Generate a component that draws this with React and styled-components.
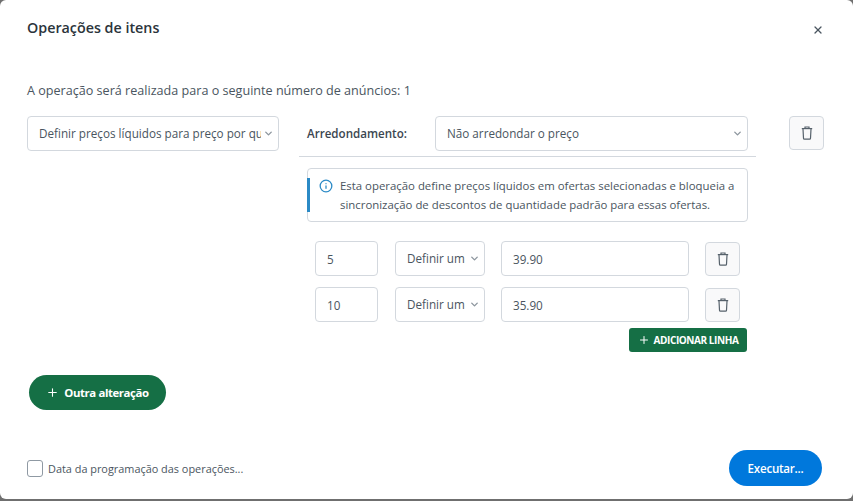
import styled, { createGlobalStyle } from "styled-components";
import { ChevronDown, Info, Plus, X } from "lucide-react";

const Global = createGlobalStyle`
  html, body {
    margin: 0;
    background: #6f6f6f;
  }
  * {
    box-sizing: border-box;
  }
`;

const Modal = styled.div`
  width: 853px;
  height: 499px;
  display: flex;
  flex-direction: column;
  background: #fff;
  border-radius: 6px;
  font-family: "Open Sans", "Liberation Sans", sans-serif;
  font-size: 11.7px;
  color: #4a5560;
`;

const Header = styled.div`
  height: 82px;
  padding: 18px 29px 0 27px;
  display: flex;
  justify-content: space-between;
  align-items: flex-start;
`;

const Title = styled.div`
  font-size: 14.3px;
  line-height: 20px;
  font-weight: 600;
  color: #2b343b;
`;

const Close = styled.div`
  margin-top: 6px;
  color: #4a5560;
  display: flex;
`;

const Count = styled.div`
  padding-left: 27px;
  font-size: 12.6px;
  line-height: 18px;
  height: 18px;
  color: #4a5560;
`;

const OperationRow = styled.div`
  margin-top: 16px;
  padding-left: 27px;
  display: flex;
  align-items: flex-start;
`;

const Panel = styled.div`
  width: 457px;
  margin-left: 20px;
  margin-right: 33px;
`;

const Rounding = styled.div`
  display: flex;
  align-items: center;
  padding: 0 8px 5px;
  border-bottom: 1px solid #d3d8de;
`;

const RoundingLabel = styled.div`
  width: 128px;
  font-size: 11.6px;
  font-weight: 600;
  color: #3b4650;
`;

const Select = styled.div`
  width: ${(p) => p.$width}px;
  height: 35px;
  flex: none;
  display: flex;
  align-items: center;
  padding: 0 4px 1px 11px;
  gap: 2px;
  background: #fff;
  border: 1px solid #d3d8de;
  border-radius: 4px;
  color: #4a5560;
  span {
    flex: 1;
    overflow: hidden;
    white-space: nowrap;
  }
  svg {
    flex: none;
    color: #8d969e;
  }
`;

const Input = styled.div`
  width: ${(p) => p.$width}px;
  height: 35px;
  flex: none;
  display: flex;
  align-items: center;
  padding-left: 11px;
  border: 1px solid #d3d8de;
  border-radius: 4px;
  color: #4a5560;
`;

const TrashButton = styled.button`
  width: 35px;
  height: 34px;
  flex: none;
  padding: 0;
  display: flex;
  align-items: center;
  justify-content: center;
  background: #f9f9fa;
  border: 1px solid #d3d8de;
  border-radius: 4px;
  color: #56616b;
`;

const Notice = styled.div`
  position: relative;
  margin: 11px 8px 0;
  height: 54px;
  padding: 7px 8px 0 32px;
  border: 1px solid #d3d8de;
  border-radius: 4px;
  font-size: 11.4px;
  line-height: 19px;
  color: #4a5560;
  &::before {
    content: "";
    position: absolute;
    left: -1px;
    top: 9px;
    width: 3px;
    height: 34px;
    background: #2b8ac6;
  }
  svg {
    position: absolute;
    left: 11px;
    top: 10px;
    color: #2b8ac6;
  }
`;

const Lines = styled.div`
  margin-top: 19px;
  padding-left: 16px;
  display: flex;
  flex-direction: column;
  gap: 11px;
`;

const Line = styled.div`
  display: flex;
  align-items: flex-end;
  gap: 16px;
`;

const TypeSelect = styled(Select)`
  margin-left: 1px;
`;

const LineActions = styled.div`
  margin-top: 6px;
  padding-right: 9px;
  display: flex;
  justify-content: flex-end;
`;

const AddLine = styled.button`
  height: 24px;
  width: 118px;
  padding: 0;
  display: flex;
  align-items: center;
  justify-content: center;
  gap: 4px;
  border: 0;
  border-radius: 3px;
  background: #156f45;
  color: #fff;
  font-family: inherit;
  font-size: 10px;
  font-weight: 700;
  letter-spacing: -0.42px;
`;

const AnotherChange = styled.button`
  margin: 23px 0 0 29px;
  width: 137px;
  height: 35px;
  padding: 0;
  display: flex;
  align-items: center;
  justify-content: center;
  gap: 5px;
  border: 0;
  border-radius: 18px;
  background: #156f45;
  color: #fff;
  font-family: inherit;
  font-size: 11.4px;
  font-weight: 700;
  letter-spacing: -0.4px;
`;

const Footer = styled.div`
  margin-top: auto;
  padding: 0 31px 13px 27px;
  display: flex;
  justify-content: space-between;
  align-items: center;
`;

const Schedule = styled.label`
  display: flex;
  align-items: center;
  gap: 5px;
  font-size: 10.9px;
  color: #4a5560;
`;

const Box = styled.span`
  width: 16px;
  height: 17px;
  border: 1px solid #8f99a3;
  border-radius: 3px;
`;

const Run = styled.button`
  width: 93px;
  height: 36px;
  padding: 0;
  border: 0;
  border-radius: 18px;
  background: #0078dc;
  color: #fff;
  font-family: inherit;
  font-size: 11.6px;
  font-weight: 600;
  letter-spacing: -0.25px;
`;

const lines = [
  { qty: "5", price: "39.90" },
  { qty: "10", price: "35.90" },
];

const Chevron = () => <ChevronDown size={11} strokeWidth={3} />;

const Bin = () => (
  <svg width="12" height="14" viewBox="0 0 12 14" fill="none" stroke="currentColor" strokeWidth="1.2">
    <path d="M.8 2.6h10.4" />
    <path d="M4 2.4V1h4v1.4" />
    <path d="M2 3l.5 9.2c0 .6.4 1 1 1h5c.6 0 1-.4 1-1L10 3" />
  </svg>
);

export default function App() {
  return (
    <Modal>
      <Global />
      <Header>
        <Title>Operações de itens</Title>
        <Close>
          <X size={12} strokeWidth={2.6} />
        </Close>
      </Header>
      <Count>A operação será realizada para o seguinte número de anúncios: 1</Count>
      <OperationRow>
        <Select $width={252}>
          <span>Definir preços líquidos para preço por quantidade</span>
          <Chevron />
        </Select>
        <Panel>
          <Rounding>
            <RoundingLabel>Arredondamento:</RoundingLabel>
            <Select $width={313}>
              <span>Não arredondar o preço</span>
              <Chevron />
            </Select>
          </Rounding>
          <Notice>
            <Info size={14} strokeWidth={2.2} />
            Esta operação define preços líquidos em ofertas selecionadas e bloqueia a sincronização de descontos de quantidade padrão para essas ofertas.
          </Notice>
          <Lines>
            {lines.map((line) => (
              <Line key={line.qty}>
                <Input $width={63}>{line.qty}</Input>
                <TypeSelect $width={90}>
                  <span>Definir um</span>
                  <Chevron />
                </TypeSelect>
                <Input $width={188}>{line.price}</Input>
                <TrashButton>
                  <Bin />
                </TrashButton>
              </Line>
            ))}
          </Lines>
          <LineActions>
            <AddLine>
              <Plus size={12} strokeWidth={2} />
              ADICIONAR LINHA
            </AddLine>
          </LineActions>
        </Panel>
        <TrashButton>
          <Bin />
        </TrashButton>
      </OperationRow>
      <AnotherChange>
        <Plus size={13} strokeWidth={2} />
        Outra alteração
      </AnotherChange>
      <Footer>
        <Schedule>
          <Box />
          Data da programação das operações...
        </Schedule>
        <Run>Executar...</Run>
      </Footer>
    </Modal>
  );
}
